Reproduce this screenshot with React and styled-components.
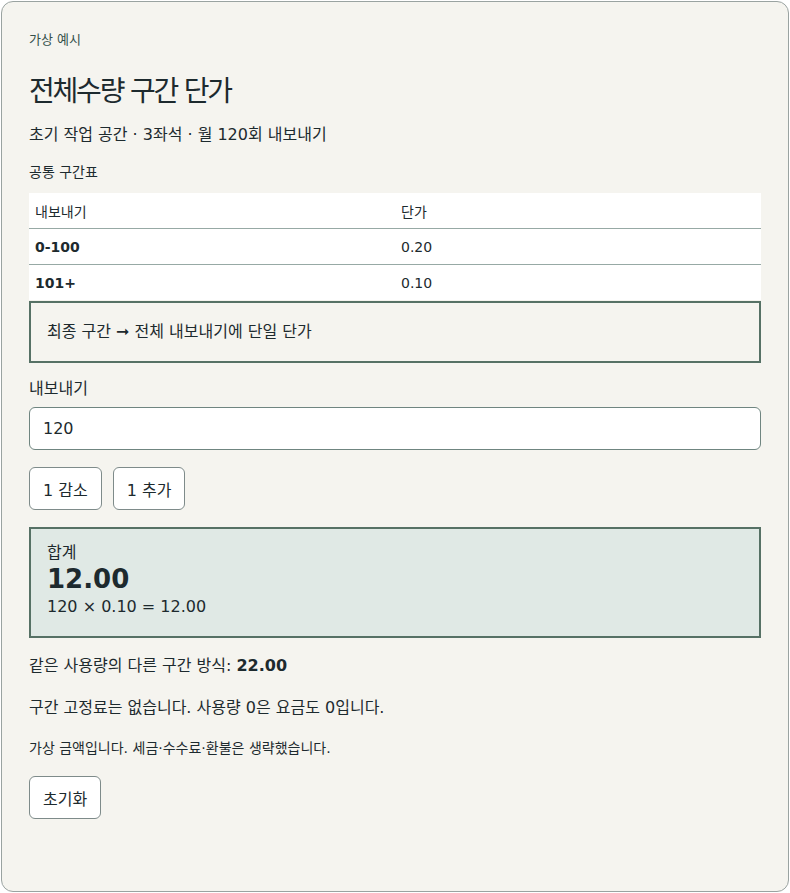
import React, { useState } from 'react';
import styled, { createGlobalStyle } from 'styled-components';

const GlobalStyle = createGlobalStyle`
    body {
        margin: 0;
        background: #ffffff;
        font-family: "DejaVu Sans", "Noto Sans CJK KR", sans-serif;
        color: #1d2a2e;
    }
`;

const Card = styled.div`
    margin: 1px;
    min-height: 891px;
    box-sizing: border-box;
    border: 1px solid #9aa3a1;
    border-radius: 12px;
    background: #f5f4ef;
    padding: 28px 27px 40px;
`;

const Eyebrow = styled.div`
    font-size: 13px;
    color: #34504b;
    line-height: 20px;
`;

const Title = styled.h1`
    font-size: 28px;
    font-weight: 400;
    margin: 24px 0 0;
    line-height: 36px;
    letter-spacing: -2.2px;
`;

const Subtitle = styled.p`
    font-size: 16px;
    margin: 13px 0 0;
    line-height: 24px;
`;

const Caption = styled.div`
    font-size: 14px;
    margin: 15px 0 0;
    line-height: 20px;
`;

const Table = styled.table`
    width: 100%;
    border-collapse: collapse;
    background: #ffffff;
    margin-top: 11px;
    font-size: 14px;
    table-layout: fixed;
`;

const Th = styled.th`
    text-align: left;
    font-weight: 400;
    padding: 0 6px;
    height: 35px;
    border-bottom: 1px solid #97a9a5;
`;

const Td = styled.td`
    padding: 0 6px;
    height: 35px;
    font-weight: ${(p) => (p.$bold ? 700 : 400)};
    border-bottom: ${(p) => (p.$last ? 'none' : '1px solid #97a9a5')};
`;

const Note = styled.div`
    margin-top: 1px;
    border: 2px solid #567165;
    padding: 19px 16px;
    font-size: 16px;
    line-height: 20px;
`;

const Label = styled.label`
    display: block;
    font-size: 16px;
    margin-top: 15px;
    line-height: 22px;
`;

const Input = styled.input`
    display: block;
    width: 100%;
    box-sizing: border-box;
    margin-top: 7px;
    height: 43px;
    padding: 0 13px;
    font: inherit;
    font-size: 16px;
    color: #1d2a2e;
    background: #ffffff;
    border: 1px solid #6f8580;
    border-radius: 6px;
`;

const ButtonRow = styled.div`
    display: flex;
    gap: 11px;
    margin-top: 17px;
`;

const Button = styled.button`
    height: 43px;
    padding: 0 13px;
    font: inherit;
    font-size: 16px;
    color: #1d2a2e;
    background: #ffffff;
    border: 1px solid #7e8b8a;
    border-radius: 6px;
    margin-top: ${(p) => p.$top || 0};
`;

const Result = styled.div`
    margin-top: 17px;
    border: 2px solid #567165;
    background: #e0e9e5;
    padding: 14px 16px 17px;
`;

const ResultLabel = styled.div`
    font-size: 16px;
    line-height: 20px;
`;

const ResultValue = styled.div`
    font-size: 26px;
    font-weight: 700;
    line-height: 32px;
`;

const ResultFormula = styled.div`
    font-size: 16px;
    line-height: 24px;
`;

const Text = styled.p`
    font-size: ${(p) => p.$size || '16px'};
    margin: ${(p) => p.$margin || '18px 0 0'};
    line-height: ${(p) => p.$line || '24px'};
`;

const tiers = [
    { range: '0-100', price: '0.20' },
    { range: '101+', price: '0.10' },
];

export default function App() {
    const [count, setCount] = useState(120);
    const price = count > 100 ? 0.1 : 0.2;
    const total = (count * price).toFixed(2);

    return (
        <>
            <GlobalStyle />
            <Card>
                <Eyebrow>가상 예시</Eyebrow>
                <Title>전체수량 구간 단가</Title>
                <Subtitle>초기 작업 공간 · 3좌석 · 월 120회 내보내기</Subtitle>
                <Caption>공통 구간표</Caption>
                <Table>
                    <thead>
                        <tr>
                            <Th>내보내기</Th>
                            <Th>단가</Th>
                        </tr>
                    </thead>
                    <tbody>
                        {tiers.map((t, i) => (
                            <tr key={t.range}>
                                <Td $bold $last={i === tiers.length - 1}>{t.range}</Td>
                                <Td $last={i === tiers.length - 1}>{t.price}</Td>
                            </tr>
                        ))}
                    </tbody>
                </Table>
                <Note>최종 구간 ➞ 전체 내보내기에 단일 단가</Note>
                <Label htmlFor="exports">내보내기</Label>
                <Input id="exports" value={count} onChange={(e) => setCount(Number(e.target.value) || 0)} />
                <ButtonRow>
                    <Button onClick={() => setCount(Math.max(0, count - 1))}>1 감소</Button>
                    <Button onClick={() => setCount(count + 1)}>1 추가</Button>
                </ButtonRow>
                <Result>
                    <ResultLabel>합계</ResultLabel>
                    <ResultValue>{total}</ResultValue>
                    <ResultFormula>{count} × {price.toFixed(2)} = {total}</ResultFormula>
                </Result>
                <Text $margin="16px 0 0">같은 사용량의 다른 구간 방식: <b>22.00</b></Text>
                <Text>구간 고정료는 없습니다. 사용량 0은 요금도 0입니다.</Text>
                <Text $size="14px" $line="20px">가상 금액입니다. 세금·수수료·환불은 생략했습니다.</Text>
                <Button $top="18px" onClick={() => setCount(120)}>초기화</Button>
            </Card>
        </>
    );
}
